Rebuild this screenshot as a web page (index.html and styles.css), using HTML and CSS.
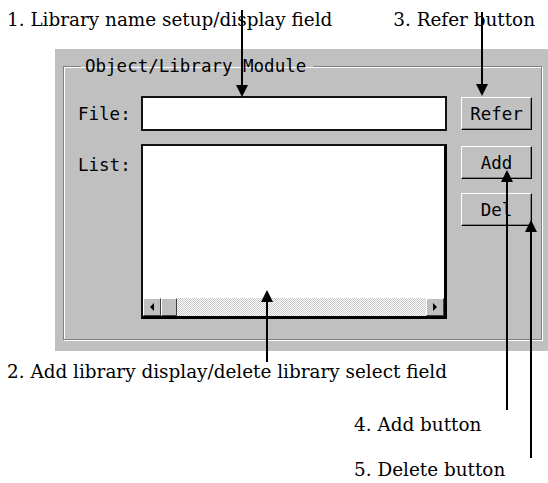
FILE: index.html
```html
<!DOCTYPE html>
<html lang="en">
<head>
    <meta charset="UTF-8">
    <title>Object/Library Module</title>
    <link rel="stylesheet" href="styles.css">
</head>
<body>

<div class="top">
    <span>1. Library name setup/display field</span>
    <span>3. Refer button</span>
</div>

<div class="panel">
    <fieldset class="group">
        <legend>Object/Library Module</legend>
        <div class="form">
            <label class="lbl lbl-file" for="file">File:</label>
            <input type="text" id="file" class="file">
            <div class="btn btn-refer">Refer</div>

            <div class="lbl lbl-list">List:</div>
            <div class="list">
                <div class="list-area"></div>
                <div class="hscroll">
                    <div class="sbtn"><span class="tri-left"></span></div>
                    <div class="thumb"></div>
                    <div class="track"></div>
                    <div class="sbtn"><span class="tri-right"></span></div>
                </div>
            </div>
            <div class="btns">
                <div class="btn">Add</div>
                <div class="btn">Del</div>
            </div>
        </div>
    </fieldset>
</div>

<div class="note note2">2. Add library display/delete library select field</div>
<div class="note note4">4. Add button</div>
<div class="note note5">5. Delete button</div>

<svg class="arrows" width="548" height="483" viewBox="0 0 548 483">
    <!-- 1 -->
    <line x1="242" y1="10" x2="242" y2="87" />
    <polygon points="236,85 248,85 242,97" />
    <!-- 3 -->
    <line x1="482" y1="12" x2="482" y2="86" />
    <polygon points="476,84 488,84 482,96" />
    <!-- 2 -->
    <line x1="267" y1="300" x2="267" y2="362" />
    <polygon points="261,302 273,302 267,290" />
    <!-- 4 -->
    <line x1="507" y1="180" x2="507" y2="410" />
    <polygon points="501,182 513,182 507,170" />
    <!-- 5 -->
    <line x1="531" y1="230" x2="531" y2="458" />
    <polygon points="525,232 537,232 531,220" />
</svg>

</body>
</html>
```

FILE: styles.css
```css
body {
    margin: 0;
    width: 548px;
    height: 483px;
    position: relative;
    background-color: #fff;
    color: #000;
    font-family: "DejaVu Serif", serif;
    font-size: 18.4px;
}

.top {
    display: flex;
    justify-content: space-between;
    height: 40px;
    padding: 9px 13px 0 7px;
    line-height: 22px;
}

.panel {
    margin-left: 55px;
    height: 302px;
    box-sizing: border-box;
    padding: 8px 6px 0 8px;
    background-color: #c0c0c0;
    font-family: "DejaVu Sans Mono", monospace;
    font-size: 17.5px;
}

.group {
    margin: 0;
    height: 283px;
    box-sizing: border-box;
    padding: 21px 0 0 14px;
    border: 1px solid #808080;
    box-shadow: 1px 1px 0 #fff, inset 1px 1px 0 #fff;
}

.group legend {
    padding: 0 7px 0 4px;
    margin-left: 3px;
    line-height: 18px;
}

.form {
    display: grid;
    grid-template-columns: 63px 306px 85px;
    grid-template-rows: 35px 175px;
    row-gap: 13px;
}

.lbl {
    line-height: 20px;
}

.lbl-file {
    align-self: center;
}

.lbl-list {
    padding-top: 11px;
}

.file {
    margin: 0;
    padding: 0;
    width: 306px;
    height: 35px;
    box-sizing: border-box;
    border: 2px solid #111;
    background-color: #fff;
}

.list {
    display: flex;
    flex-direction: column;
    box-sizing: border-box;
    border-top: 2px solid #111;
    border-left: 2px solid #111;
    border-right: 3px solid #000;
    border-bottom: 3px solid #000;
    background-color: #fff;
}

.list-area {
    flex: 1;
}

.hscroll {
    display: flex;
    height: 18px;
}

.sbtn, .thumb {
    width: 18px;
    height: 18px;
    box-sizing: border-box;
    display: flex;
    justify-content: center;
    align-items: center;
    background-color: #c0c0c0;
    border: 1px solid;
    border-color: #fff #404040 #404040 #fff;
}

.thumb {
    width: 16px;
}

.track {
    flex: 1;
    background: repeating-conic-gradient(#c8c8c8 0 25%, #fff 0 50%) 0 0 / 2px 2px;
}

.tri-left {
    border-top: 4px solid transparent;
    border-bottom: 4px solid transparent;
    border-right: 4px solid #000;
}

.tri-right {
    border-top: 4px solid transparent;
    border-bottom: 4px solid transparent;
    border-left: 4px solid #000;
}

.btn {
    width: 71px;
    height: 33px;
    box-sizing: border-box;
    display: flex;
    justify-content: center;
    align-items: center;
    background-color: #c0c0c0;
    border: 1px solid;
    border-color: #fff #000 #000 #fff;
    box-shadow: inset -1px -1px 0 #808080;
}

.btn-refer {
    margin: 1px 0 0 14px;
}

.btns {
    display: flex;
    flex-direction: column;
    gap: 14px;
    padding: 2px 0 0 14px;
}

.note {
    line-height: 22px;
}

.note2 {
    margin-top: 10px;
    padding-left: 7px;
}

.note4 {
    margin-top: 31px;
    padding-left: 354px;
}

.note5 {
    margin-top: 23px;
    padding-left: 354px;
}

.arrows {
    position: absolute;
    top: 0;
    left: 0;
    pointer-events: none;
}

.arrows line {
    stroke: #000;
    stroke-width: 2;
}

.arrows polygon {
    fill: #000;
}
```
